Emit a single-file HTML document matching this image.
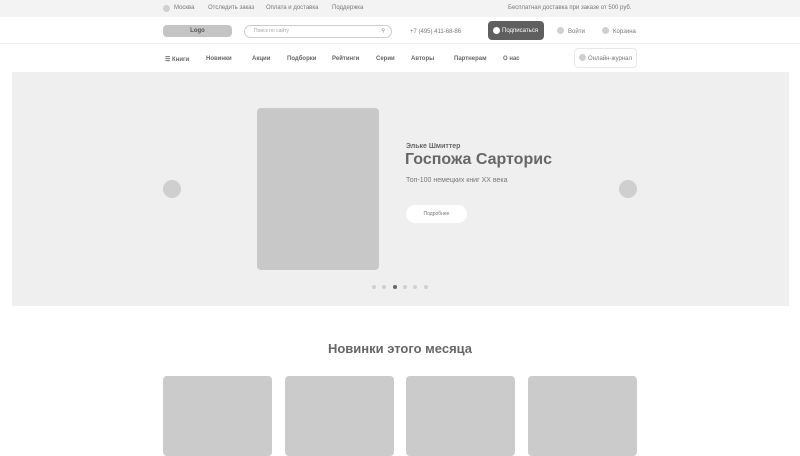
<!DOCTYPE html><html><head><meta charset="utf-8"><style>
*{margin:0;padding:0;box-sizing:border-box}
body{width:800px;height:450px;overflow:hidden;background:#fff;font-family:"Liberation Sans",sans-serif;color:#777;position:relative}
.a{position:absolute;white-space:nowrap}
.s{font-size:6px}
.c{border-radius:50%;background:#d0d0d0}
.nav{font-size:6px;font-weight:bold;color:#666;top:56px}
</style></head><body>
<div class="a" style="left:0;top:0;width:800px;height:17px;background:#f3f3f3"></div>
<div class="a c" style="left:163px;top:5px;width:7px;height:7px"></div>
<div class="a s" style="left:174px;top:5px">Москва</div>
<div class="a s" style="left:208px;top:5px">Отследить заказ</div>
<div class="a s" style="left:266px;top:5px">Оплата и доставка</div>
<div class="a s" style="left:332px;top:5px">Поддержка</div>
<div class="a s" style="left:508px;top:5px">Бесплатная доставка при заказе от 500 руб.</div>
<div class="a" style="left:0;top:43px;width:800px;height:1px;background:#eee"></div>
<div class="a" style="left:163px;top:25px;width:69px;height:12px;background:#c4c4c4;border-radius:4px;font-size:6px;font-weight:bold;color:#555;text-align:center;line-height:13px">Logo</div>
<div class="a" style="left:244px;top:25px;width:148px;height:13px;border:1px solid #ccc;border-radius:7px;font-size:5px;color:#aaa;padding-left:9px;line-height:11px">Поиск по сайту<span style="position:absolute;right:6px;color:#777">&#9906;</span></div>
<div class="a s" style="left:410px;top:29px">+7 (495) 411-68-86</div>
<div class="a" style="left:488px;top:21px;width:56px;height:19px;background:#5f5f5f;border-radius:4px"></div>
<div class="a c" style="left:493px;top:27px;width:7px;height:7px;background:#fff"></div>
<div class="a s" style="left:502px;top:28px;color:#fff">Подписаться</div>
<div class="a c" style="left:557px;top:27px;width:7px;height:7px"></div>
<div class="a s" style="left:568px;top:29px">Войти</div>
<div class="a c" style="left:602px;top:27px;width:7px;height:7px"></div>
<div class="a s" style="left:613px;top:29px">Корзина</div>
<div class="a nav" style="left:165px">☰ Книги</div>
<div class="a nav" style="left:206px">Новинки</div>
<div class="a nav" style="left:252px">Акции</div>
<div class="a nav" style="left:287px">Подборки</div>
<div class="a nav" style="left:332px">Рейтинги</div>
<div class="a nav" style="left:376px">Серии</div>
<div class="a nav" style="left:411px">Авторы</div>
<div class="a nav" style="left:454px">Партнерам</div>
<div class="a nav" style="left:503px">О нас</div>
<div class="a" style="left:574px;top:48px;width:63px;height:20px;border:1px solid #e8e8e8;border-radius:4px"></div>
<div class="a c" style="left:579px;top:54px;width:7px;height:7px"></div>
<div class="a s" style="left:588px;top:56px">Онлайн-журнал</div>
<div class="a" style="left:12px;top:72px;width:777px;height:234px;background:#efefef"></div>
<div class="a" style="left:257px;top:108px;width:122px;height:162px;background:#c8c8c8;border-radius:4px"></div>
<div class="a c" style="left:163px;top:180px;width:18px;height:18px;background:#cfcfcf"></div>
<div class="a c" style="left:619px;top:180px;width:18px;height:18px;background:#cfcfcf"></div>
<div class="a" style="left:406px;top:143px;font-size:7px;font-weight:bold;color:#666">Эльке Шмиттер</div>
<div class="a" style="left:405px;top:151px;font-size:16px;font-weight:bold;color:#666">Госпожа Сарторис</div>
<div class="a" style="left:406px;top:177px;font-size:7px;color:#777">Топ-100 немецких книг XX века</div>
<div class="a" style="left:406px;top:205px;width:61px;height:18px;background:#fff;border-radius:9px;font-size:5px;text-align:center;line-height:18px">Подробнее</div>
<div class="a c" style="left:372px;top:285px;width:4px;height:4px"></div>
<div class="a c" style="left:382px;top:285px;width:4px;height:4px"></div>
<div class="a c" style="left:393px;top:285px;width:4px;height:4px;background:#666"></div>
<div class="a c" style="left:403px;top:285px;width:4px;height:4px"></div>
<div class="a c" style="left:413px;top:285px;width:4px;height:4px"></div>
<div class="a c" style="left:424px;top:285px;width:4px;height:4px"></div>
<div class="a" style="left:0;width:800px;top:341px;text-align:center;font-size:13px;font-weight:bold;color:#666">Новинки этого месяца</div>
<div class="a" style="left:163px;top:376px;width:109px;height:80px;background:#cbcbcb;border-radius:4px"></div>
<div class="a" style="left:285px;top:376px;width:109px;height:80px;background:#cbcbcb;border-radius:4px"></div>
<div class="a" style="left:406px;top:376px;width:109px;height:80px;background:#cbcbcb;border-radius:4px"></div>
<div class="a" style="left:528px;top:376px;width:109px;height:80px;background:#cbcbcb;border-radius:4px"></div>
</body></html>
